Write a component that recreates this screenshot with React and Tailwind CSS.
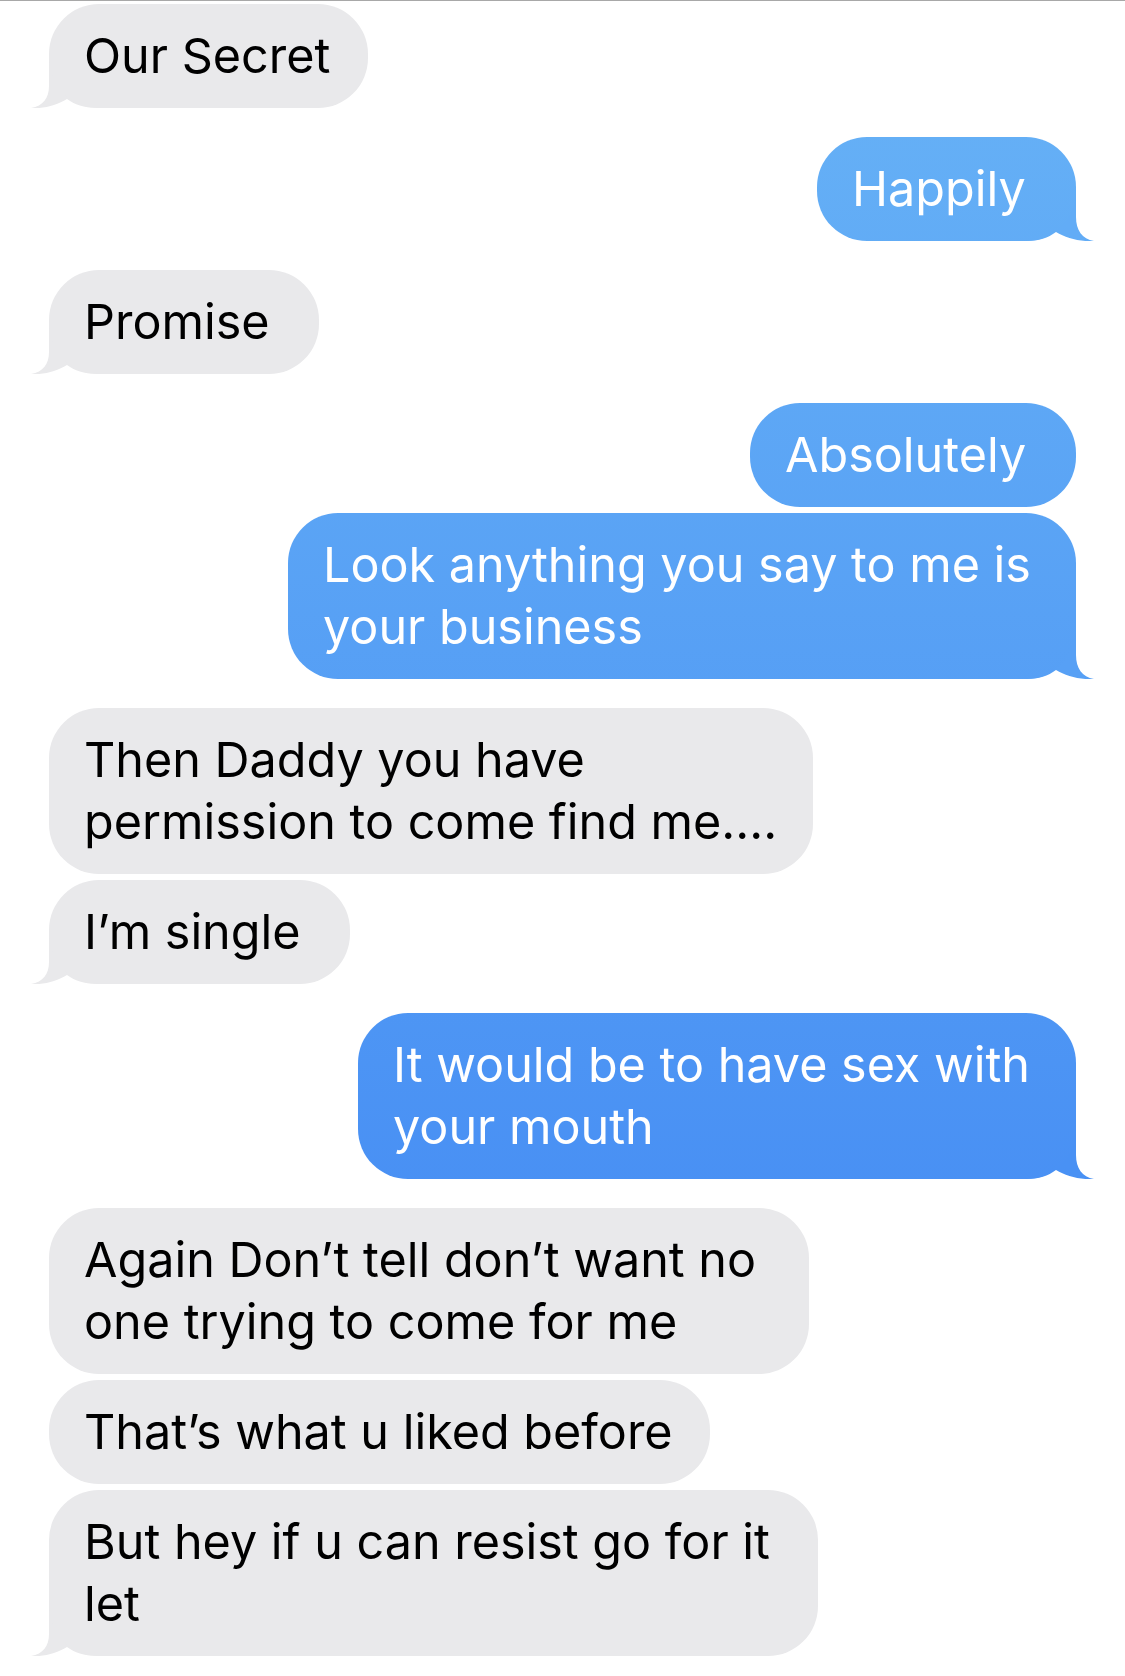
import clsx from 'clsx';

// conversation, top to bottom
const messages = [
  { from: 'them', lines: ['Our Secret'], width: 'w-[319px]', tail: true },
  { from: 'me', lines: ['Happily'], width: 'w-[259px]', tail: true, tailColor: '#62acf6' },
  { from: 'them', lines: ['Promise'], width: 'w-[270px]', tail: true },
  { from: 'me', lines: ['Absolutely'], width: 'w-[326px]' },
  { from: 'me', lines: ['Look anything you say to me is', 'your business'], width: 'w-[788px]', tail: true, tailColor: '#57a0f5' },
  { from: 'them', lines: ['Then Daddy you have', 'permission to come find me....'], width: 'w-[764px]' },
  { from: 'them', lines: ['I\u2019m single'], width: 'w-[301px]', tail: true },
  { from: 'me', lines: ['It would be to have sex with', 'your mouth'], width: 'w-[718px]', tail: true, tailColor: '#4991f4' },
  { from: 'them', lines: ['Again Don\u2019t tell don\u2019t want no', 'one trying to come for me'], width: 'w-[760px]' },
  { from: 'them', lines: ['That\u2019s what u liked before'], width: 'w-[661px]' },
  { from: 'them', lines: ['But hey if u can resist go for it', 'let'], width: 'w-[769px]', tail: true },
];

function Tail({ mine, color }) {
  if (mine) {
    return (
      <svg
        className="absolute bottom-0 right-[-18px]"
        width="68"
        height="50"
        viewBox="0 0 68 50"
      >
        <path
          d="M50 0 L50 26 C50 39 56 48 68 50 C54 51 40 47 30 41 C22 47 13 50 0 50 L0 0 Z"
          fill={color}
        />
      </svg>
    );
  }
  return (
    <svg
      className="absolute bottom-0 left-[-18px]"
      width="68"
      height="50"
      viewBox="0 0 68 50"
    >
      <path
        d="M18 0 L18 28 C18 40 12 48 0 50 C13 51 26 47 36 41 C44 47 54 50 68 50 L68 0 Z"
        fill="#e9e9eb"
      />
    </svg>
  );
}

function Bubble({ msg, gap }) {
  const mine = msg.from === 'me';
  return (
    <div
      className={clsx(
        'relative',
        msg.width,
        mine ? 'self-end' : 'self-start',
        gap ? 'mt-[29px]' : 'mt-[6px]'
      )}
    >
      {msg.tail && <Tail mine={mine} color={msg.tailColor} />}
      <div
        className={clsx(
          'relative rounded-[50px] py-[21px] pl-[35px] text-[48.5px] leading-[62px] whitespace-nowrap',
          mine
            ? 'bg-fixed bg-[linear-gradient(180deg,#68b3f6,#3c82f3)] text-white'
            : 'bg-[#e9e9eb] text-black'
        )}
      >
        {msg.lines.map((line, i) => (
          <div key={i}>{line}</div>
        ))}
      </div>
    </div>
  );
}

export default function App() {
  return (
    <div className="min-h-screen bg-white border-t border-[#a8a8a8] font-['Inter','Liberation_Sans',sans-serif]">
      <div className="flex flex-col px-[49px] pt-[3px] pb-[20px] -mt-[6px]">
        {messages.map((msg, i) => (
          <Bubble
            key={i}
            msg={msg}
            gap={i > 0 && messages[i - 1].from !== msg.from}
          />
        ))}
      </div>
    </div>
  );
}
